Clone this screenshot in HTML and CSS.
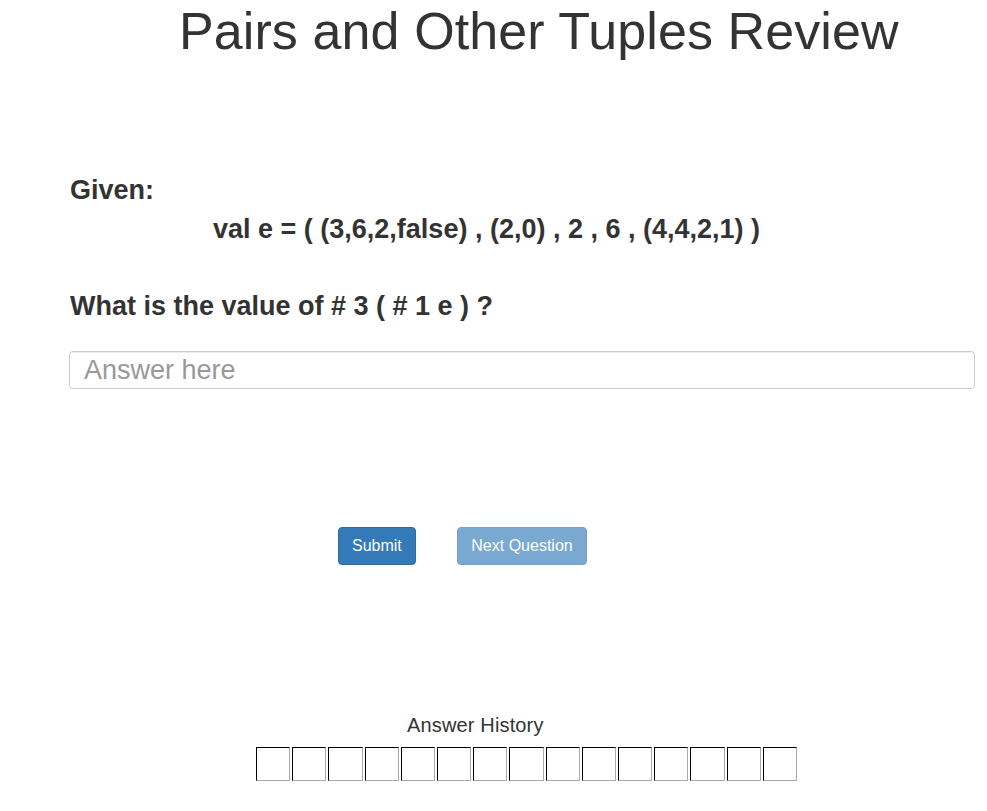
FILE: index.html
```html
<!DOCTYPE html>
<html lang="en">
<head>
<meta charset="utf-8">
<title>Pairs and Other Tuples Review</title>
<link rel="stylesheet" href="styles.css">
</head>
<body>
<div class="page">
  <h1 class="title">Pairs and Other Tuples Review</h1>
  <div class="quiz">
    <h3 class="given">Given:</h3>
    <h3 class="code">val e = ( (3,6,2,false) , (2,0) , 2 , 6 , (4,4,2,1) )</h3>
    <h3 class="question">What is the value of # 3 ( # 1 e ) ?</h3>
    <input class="answer" type="text" placeholder="Answer here">
    <div class="actions">
      <button class="btn btn-submit" type="button">Submit</button>
      <button class="btn btn-next" type="button" disabled>Next Question</button>
    </div>
  </div>
  <div class="history">
    <div class="history-label">Answer History</div>
    <div class="history-boxes">
      <span class="box"></span><span class="box"></span><span class="box"></span>
      <span class="box"></span><span class="box"></span><span class="box"></span>
      <span class="box"></span><span class="box"></span><span class="box"></span>
      <span class="box"></span><span class="box"></span><span class="box"></span>
      <span class="box"></span><span class="box"></span><span class="box"></span>
    </div>
  </div>
</div>
</body>
</html>
```

FILE: styles.css
```css
html, body {
  margin: 0;
  padding: 0;
  background: #fff;
}

body {
  font-family: "Liberation Sans", Arial, sans-serif;
  color: #333;
  font-size: 14px;
}

.page {
  width: 987px;
}

.title {
  margin: 1px 0 0 179px;
  font-size: 52px;
  line-height: 60px;
  font-weight: 400;
  letter-spacing: 0.1px;
  white-space: nowrap;
}

.quiz {
  padding: 0 12px 0 69px;
}

.given,
.code,
.question {
  margin: 0;
  font-size: 27px;
  line-height: 30px;
  font-weight: 700;
}

.given {
  margin-top: 114px;
  padding-left: 1px;
}

.code {
  margin-top: 9px;
  padding-left: 144px;
}

.question {
  margin-top: 47px;
  padding-left: 1px;
}

.answer {
  display: block;
  box-sizing: border-box;
  width: 906px;
  height: 38px;
  margin-top: 30px;
  padding: 4px 14px;
  border: 1px solid #ccc;
  border-radius: 4px;
  font-family: "Liberation Sans", Arial, sans-serif;
  font-size: 27px;
  color: #555;
  box-shadow: inset 0 1px 1px rgba(0, 0, 0, .075);
  outline: none;
}

.answer::placeholder {
  color: #999;
}

.actions {
  display: flex;
  gap: 41px;
  margin-top: 138px;
  padding-left: 269px;
}

.btn {
  box-sizing: border-box;
  height: 38px;
  padding: 6px 13px;
  border: 1px solid #2e6da4;
  border-radius: 4px;
  background: #337ab7;
  color: #fff;
  font-family: "Liberation Sans", Arial, sans-serif;
  font-size: 16px;
  line-height: 24px;
}

.btn-next {
  padding: 6px 13.5px;
  opacity: .65;
}

.history {
  margin-top: 148px;
}

.history-label {
  margin-left: 407px;
  font-size: 20px;
  line-height: 24px;
  letter-spacing: 0.15px;
}

.history-boxes {
  display: flex;
  gap: 2px;
  width: 541px;
  margin: 10px 0 0 256px;
}

.box {
  flex: 1;
  height: 34px;
  box-sizing: border-box;
  border: 1px solid;
  border-color: #000 #aaa #aaa #000;
}
```
